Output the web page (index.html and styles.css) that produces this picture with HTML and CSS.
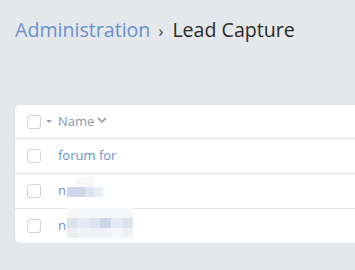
FILE: index.html
```html
<!DOCTYPE html>
<html>
<head>
  <title>Lead Capture</title>
  <link rel="stylesheet" href="styles.css">
</head>
<body>
  <div class="breadcrumb">
    <a class="crumb-link" href="#">Administration</a>
    <span class="crumb-sep">›</span>
    <span class="crumb-current">Lead Capture</span>
  </div>

  <div class="card">
    <div class="row head">
      <span class="check"></span>
      <span class="caret"></span>
      <span class="col-name">Name
        <svg class="chev" width="10" height="7" viewBox="0 0 10 7"><path d="M1 1.2 L5 5 L9 1.2" fill="none" stroke="#8c97aa" stroke-width="1.6"/></svg>
      </span>
    </div>
    <div class="row">
      <span class="check"></span>
      <a class="name" href="#">forum for</a>
    </div>
    <div class="row">
      <span class="check"></span>
      <a class="name" href="#">n</a>
      <span class="blur b1">
        <i class="p0"></i><i class="p1"></i><i class="p1"></i><i class="p0"></i>
        <i class="p3"></i><i class="p3"></i><i class="p4"></i><i class="p5"></i>
      </span>
    </div>
    <div class="row">
      <span class="check"></span>
      <a class="name" href="#">n</a>
      <span class="blur b2">
        <i class="p1"></i><i class="p1"></i><i class="p1"></i><i class="p1"></i><i class="p1"></i><i class="p1"></i>
        <i class="p4"></i><i class="p6"></i><i class="p4"></i><i class="p3"></i><i class="p6"></i><i class="p4"></i>
        <i class="p5"></i><i class="p2"></i><i class="p2"></i><i class="p2"></i><i class="p1"></i><i class="p2"></i>
      </span>
    </div>
  </div>
</body>
</html>
```

FILE: styles.css
```css
body {
  margin: 0;
  background: #e4e8eb;
  font-family: "Open Sans", sans-serif;
  overflow: hidden;
}
.breadcrumb {
  padding: 15px 0 0 15px;
  height: 90px;
  box-sizing: border-box;
  font-size: 19.6px;
  line-height: 30px;
  white-space: nowrap;
}
.crumb-link {
  color: #6a90cf;
  text-decoration: none;
}
.crumb-sep {
  color: #333;
  font-size: 16px;
  margin: 0 4px 0 3px;
}
.crumb-current {
  color: #2b2b2b;
}
.card {
  margin: 15px 0 0 15px;
  background: #fff;
  border-radius: 5px 0 0 5px;
  box-shadow: 0 1px 3px rgba(0, 0, 0, 0.08);
}
.row {
  display: flex;
  align-items: center;
  height: 34px;
  padding-left: 12px;
  border-top: 1px solid #e2e4e7;
  font-size: 13px;
}
.row.head {
  border-top: none;
  height: 33px;
}
.check {
  width: 12px;
  height: 12px;
  border: 1px solid #cfd2d6;
  border-radius: 3px;
  background: #fff;
}
.caret {
  width: 0;
  height: 0;
  border-left: 3px solid transparent;
  border-right: 3px solid transparent;
  border-top: 3px solid #9aa0a8;
  margin: 0 6px 0 5px;
}
.col-name {
  color: #8c97aa;
  display: flex;
  align-items: center;
  gap: 3px;
  margin-top: -2px;
}
.name {
  color: #6a90cf;
  text-decoration: none;
  margin-left: 17px;
  margin-top: -3px;
}
.blur {
  display: grid;
  grid-auto-rows: 10px;
  margin-left: 1px;
}
.blur i {
  display: block;
}
.b1 {
  grid-template-columns: repeat(4, 9px);
  margin-top: -8px;
}
.b2 {
  grid-template-columns: repeat(6, 11px);
  margin-top: -6px;
}
.p0 { background: #ffffff; }
.p1 { background: #f5f7f9; }
.p2 { background: #eef1f6; }
.p3 { background: #ccd6e8; }
.p4 { background: #dce3ef; }
.p5 { background: #e9edf4; }
.p6 { background: #e4e9f2; }
```
